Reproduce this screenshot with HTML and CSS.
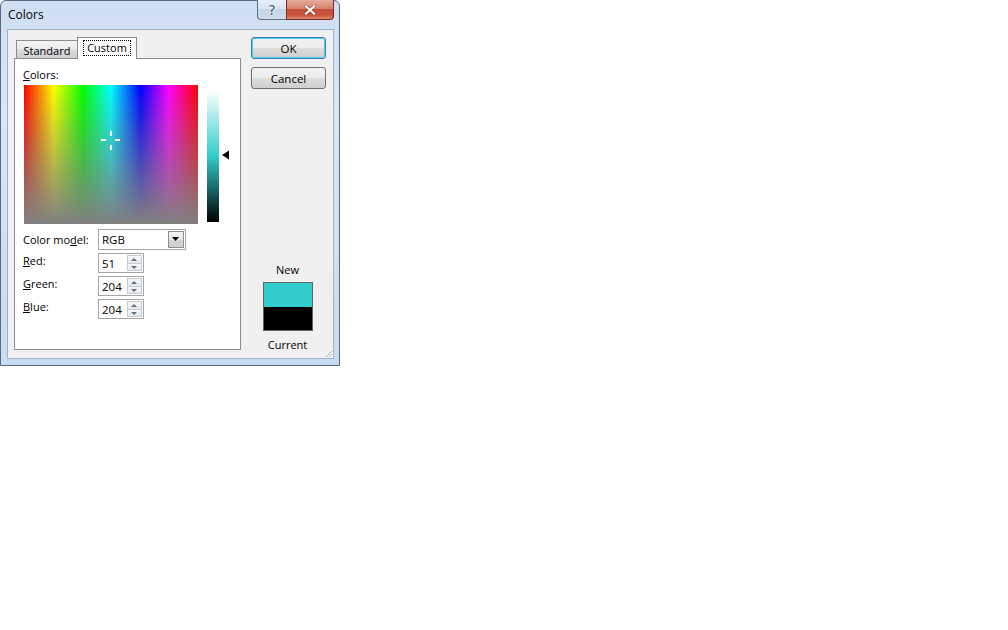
FILE: index.html
```html
<!DOCTYPE html>
<html>
<head>
<meta charset="utf-8">
<title>Colors</title>
<link rel="stylesheet" href="styles.css">
</head>
<body>
<div class="window">
  <div class="titlebar">
    <span class="title">Colors</span>
    <div class="caption-btns">
      <div class="cbtn help">?</div>
      <div class="cbtn close">
        <svg width="12" height="10" viewBox="0 0 12 10"><path d="M2 1.5 L10 8.5 M10 1.5 L2 8.5" stroke="#5a1c14" stroke-width="3.6" stroke-linecap="square" opacity="0.45"/><path d="M2 1.5 L10 8.5 M10 1.5 L2 8.5" stroke="#fff" stroke-width="2.2" stroke-linecap="square"/></svg>
      </div>
    </div>
  </div>
  <div class="client">
    <div class="left">
      <div class="tabs">
        <div class="tab">Standard</div>
        <div class="tab active"><span class="focus">Custom</span></div>
      </div>
      <div class="panel">
        <div class="lbl"><u>C</u>olors:</div>
        <div class="picker-row">
          <div class="spectrum">
            <svg class="cross" width="21" height="21" viewBox="0 0 21 21">
              <rect x="9" y="0" width="2" height="5" fill="#fff"/>
              <rect x="9" y="14" width="2" height="5" fill="#fff"/>
              <rect x="0" y="8" width="5" height="2" fill="#fff"/>
              <rect x="14" y="8" width="5" height="2" fill="#fff"/>
            </svg>
          </div>
          <div class="lum"></div>
          <svg class="arrow" width="8" height="10" viewBox="0 0 8 10"><path d="M0 5 L7 0.5 L7 9.5 Z" fill="#000"/></svg>
        </div>
        <div class="field-row model-row">
          <div class="flabel">Color mo<u>d</u>el:</div>
          <div class="select">
            <span class="sel-text">RGB</span>
            <span class="sel-btn"><svg width="8" height="5" viewBox="0 0 8 5"><path d="M0 0 H7 L3.5 4 Z" fill="#000"/></svg></span>
          </div>
        </div>
        <div class="field-row">
          <div class="flabel"><u>R</u>ed:</div>
          <div class="spin"><span class="spin-val">51</span><span class="spin-btns"><span class="sb up"></span><span class="sb down"></span></span></div>
        </div>
        <div class="field-row">
          <div class="flabel"><u>G</u>reen:</div>
          <div class="spin"><span class="spin-val">204</span><span class="spin-btns"><span class="sb up"></span><span class="sb down"></span></span></div>
        </div>
        <div class="field-row">
          <div class="flabel"><u>B</u>lue:</div>
          <div class="spin"><span class="spin-val">204</span><span class="spin-btns"><span class="sb up"></span><span class="sb down"></span></span></div>
        </div>
      </div>
    </div>
    <div class="right">
      <div class="btn default">OK</div>
      <div class="btn">Cancel</div>
      <div class="swatch-label new-label">New</div>
      <div class="swatch">
        <div class="sw-new"></div>
        <div class="sw-cur"></div>
      </div>
      <div class="swatch-label">Current</div>
    </div>
    <svg class="grip" width="9" height="9" viewBox="0 0 9 9">
      <path d="M8 2 L2 8 M8 5 L5 8" stroke="#a9acb2" stroke-width="1"/>
      <path d="M9 3 L3 9 M9 6 L6 9" stroke="#fff" stroke-width="1"/>
    </svg>
  </div>
</div>
</body>
</html>
```

FILE: styles.css
```css
* { box-sizing: border-box; }
html, body {
  margin: 0;
  padding: 0;
  background: #fff;
}
body {
  font-family: "Open Sans", "Noto Sans", sans-serif;
  font-size: 11px;
  color: #000;
}
u { text-decoration: underline; text-underline-offset: 1px; }

.window {
  width: 340px;
  height: 366px;
  border: 1px solid #58697f;
  border-radius: 6px 6px 0 0;
  background: linear-gradient(180deg, #cedff2 0%, #d9e6f4 30%, #c9dbef 100%);
  padding: 0 5px 6px 6px;
  display: flex;
  flex-direction: column;
}

.titlebar {
  height: 28px;
  display: flex;
  align-items: flex-start;
  padding-left: 1px;
}
.title {
  font-size: 12px;
  line-height: 14px;
  margin-top: 7px;
}
.caption-btns {
  margin-left: auto;
  display: flex;
  margin-top: -1px;
}
.cbtn {
  height: 20px;
  display: flex;
  align-items: center;
  justify-content: center;
  border: 1px solid #5f6f86;
  border-top: none;
}
.help {
  width: 29px;
  border-radius: 0 0 0 4px;
  border-right: none;
  background: linear-gradient(180deg, #e8eff8 0%, #d9e4f1 45%, #c3d3e6 50%, #cfdbea 100%);
  color: #4a5d78;
  font-size: 14px;
  font-family: "DejaVu Sans", sans-serif;
  text-shadow: 0 0 2px #fff;
}
.close {
  width: 48px;
  border-radius: 0 0 4px 0;
  border-color: #7b2a20;
  background: linear-gradient(180deg, #e4ac9c 0%, #d88170 45%, #c8503a 50%, #c9553d 80%, #dc8a74 100%);
}

.client {
  flex: 1;
  border: 1px solid #9fb3cb;
  background: #f0f0f0;
  display: flex;
  position: relative;
}

.left {
  margin: 7px 0 0 6px;
  width: 227px;
  display: flex;
  flex-direction: column;
}
.tabs {
  display: flex;
  align-items: flex-end;
  padding-left: 2px;
  height: 21px;
  position: relative;
  z-index: 1;
}
.tab {
  height: 18px;
  width: 62px;
  border: 1px solid #898c95;
  border-bottom: none;
  background: linear-gradient(180deg, #f3f3f3 0%, #ebebeb 50%, #dddddd 50%, #cfcfcf 100%);
  display: flex;
  align-items: center;
  justify-content: center;
  padding-top: 1px;
}
.tab.active {
  height: 22px;
  width: 60px;
  margin-left: -1px;
  background: #fff;
  margin-bottom: -1px;
  padding-top: 0;
  align-items: flex-start;
}
.focus {
  border: 1px dotted #000;
  padding: 0 3px;
  margin-top: 2px;
  line-height: 14px;
}
.panel {
  height: 292px;
  border: 1px solid #898c95;
  background: #fff;
  padding: 8px 0 0 8px;
}
.lbl {
  line-height: 14px;
  height: 14px;
  margin-top: 1px;
}
.picker-row {
  display: flex;
  align-items: flex-start;
  margin-top: 3px;
}
.spectrum {
  width: 174px;
  height: 139px;
  margin-left: 1px;
  position: relative;
  background:
    linear-gradient(180deg, rgba(128,128,128,0) 0%, rgba(128,128,128,1) 100%),
    linear-gradient(90deg, #ff0000 0%, #ffff00 17%, #00ff00 34%, #00ffff 50%, #0000ff 67%, #ff00ff 83%, #ff0000 100%);
}
.cross {
  position: absolute;
  left: 77px;
  top: 46px;
}
.lum {
  width: 12px;
  height: 132px;
  margin-left: 9px;
  margin-top: 5px;
  background: linear-gradient(180deg, #ffffff 0%, #33cccc 50%, #000000 100%);
}
.arrow {
  margin-left: 3px;
  margin-top: 65px;
}

.field-row {
  display: flex;
  align-items: flex-start;
  margin-top: 3px;
  height: 20px;
}
.model-row {
  margin-top: 5px;
  height: 21px;
  margin-bottom: 1px;
}
.flabel {
  width: 75px;
  line-height: 14px;
  padding-top: 1px;
}
.model-row .flabel { padding-top: 4px; }
.select {
  width: 88px;
  height: 21px;
  border: 1px solid #a5a5a5;
  background: #fff;
  display: flex;
  align-items: center;
  padding: 0 1px 0 3px;
}
.sel-text { flex: 1; font-size: 11.5px; }
.sel-btn {
  width: 16px;
  height: 17px;
  border: 1px solid #8e8f8f;
  background: linear-gradient(180deg, #f2f2f2 0%, #e5e5e5 50%, #d4d4d4 51%, #cfcfcf 100%);
  display: flex;
  align-items: center;
  justify-content: center;
}
.spin {
  width: 46px;
  height: 20px;
  border: 1px solid #a5a5a5;
  background: #fff;
  display: flex;
  align-items: center;
  padding: 0 1px 0 3px;
}
.spin-val { flex: 1; font-size: 11.5px; padding-top: 1px; }
.spin-btns {
  width: 15px;
  height: 16px;
  display: flex;
  flex-direction: column;
}
.sb {
  flex: 1;
  border: 1px solid #c4cbd4;
  background: linear-gradient(180deg, #f7f8fa, #e4e8ee);
  position: relative;
}
.sb.down { border-top: none; }
.sb::after {
  content: "";
  position: absolute;
  left: 3px;
  border-left: 3.5px solid transparent;
  border-right: 3.5px solid transparent;
}
.sb.up::after { top: 2px; border-bottom: 3px solid #5e6f8b; }
.sb.down::after { top: 2px; border-top: 3px solid #5e6f8b; }

.right {
  margin: 7px 0 0 10px;
  width: 75px;
  display: flex;
  flex-direction: column;
}
.btn {
  height: 22px;
  border: 1px solid #707070;
  border-radius: 3px;
  background: linear-gradient(180deg, #f2f2f2 0%, #ebebeb 50%, #dddddd 50%, #cfcfcf 100%);
  display: flex;
  align-items: center;
  justify-content: center;
  font-size: 11.5px;
  margin-bottom: 8px;
}
.btn.default {
  border-color: #3c7fb1;
  box-shadow: inset 0 0 0 1px #48d1f6;
}
.swatch-label {
  text-align: center;
  margin-left: -2px;
  line-height: 14px;
}
.new-label { margin-top: 166px; }
.swatch {
  width: 50px;
  height: 49px;
  margin: 5px 0 7px 12px;
  border: 1px solid #646464;
  display: flex;
  flex-direction: column;
}
.sw-new { flex: 1; background: #33cccc; }
.sw-cur { flex: 1; background: #000; }

.grip {
  position: absolute;
  right: 0;
  bottom: 0;
}
```
